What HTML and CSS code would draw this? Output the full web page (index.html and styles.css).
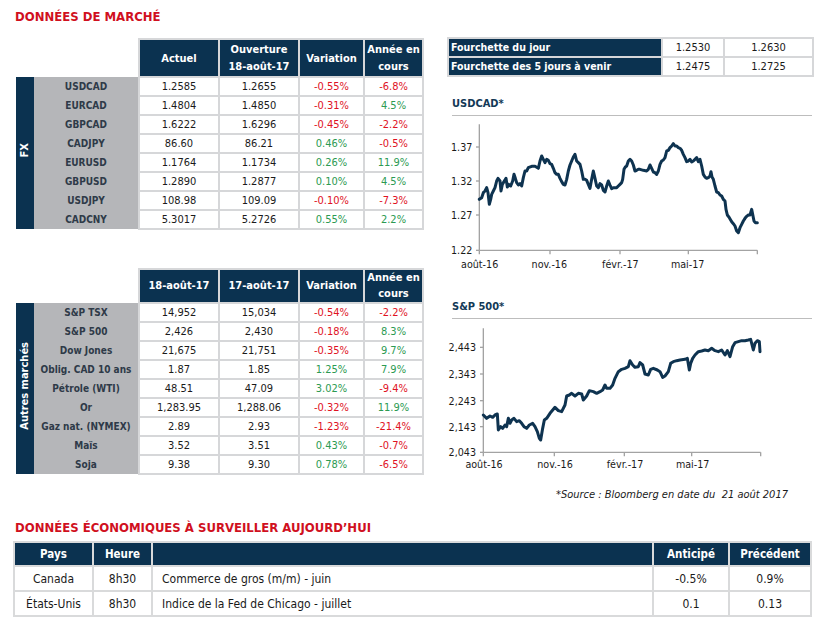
FILE: index.html
```html
<!DOCTYPE html>
<html lang="fr">
<head>
<meta charset="utf-8">
<title>Données de marché</title>
<link rel="stylesheet" href="styles.css">
</head>
<body>
<div class="page">
  <h1 class="title">DONNÉES DE MARCHÉ</h1>
  <div class="top">
    <div class="left">
      <table class="mkt fx">
        <colgroup><col class="c-side"><col class="c-lbl"><col class="c-a"><col class="c-b"><col class="c-c"><col class="c-d"></colgroup>
        <thead>
          <tr><th class="blank" colspan="2"></th><th>Actuel</th><th>Ouverture<br>18-août-17</th><th>Variation</th><th>Année en<br>cours</th></tr>
        </thead>
        <tbody>
          <tr><td class="side" rowspan="8"><span>FX</span></td><td class="lbl">USDCAD</td><td>1.2585</td><td>1.2655</td><td class="neg">-0.55%</td><td class="neg">-6.8%</td></tr>
          <tr><td class="lbl">EURCAD</td><td>1.4804</td><td>1.4850</td><td class="neg">-0.31%</td><td class="pos">4.5%</td></tr>
          <tr><td class="lbl">GBPCAD</td><td>1.6222</td><td>1.6296</td><td class="neg">-0.45%</td><td class="neg">-2.2%</td></tr>
          <tr><td class="lbl">CADJPY</td><td>86.60</td><td>86.21</td><td class="pos">0.46%</td><td class="neg">-0.5%</td></tr>
          <tr><td class="lbl">EURUSD</td><td>1.1764</td><td>1.1734</td><td class="pos">0.26%</td><td class="pos">11.9%</td></tr>
          <tr><td class="lbl">GBPUSD</td><td>1.2890</td><td>1.2877</td><td class="pos">0.10%</td><td class="pos">4.5%</td></tr>
          <tr><td class="lbl">USDJPY</td><td>108.98</td><td>109.09</td><td class="neg">-0.10%</td><td class="neg">-7.3%</td></tr>
          <tr><td class="lbl">CADCNY</td><td>5.3017</td><td>5.2726</td><td class="pos">0.55%</td><td class="pos">2.2%</td></tr>
        </tbody>
      </table>

      <table class="mkt other">
        <colgroup><col class="c-side"><col class="c-lbl"><col class="c-a"><col class="c-b"><col class="c-c"><col class="c-d"></colgroup>
        <thead>
          <tr><th class="blank" colspan="2"></th><th>18-août-17</th><th>17-août-17</th><th>Variation</th><th class="tight">Année en<br>cours</th></tr>
        </thead>
        <tbody>
          <tr><td class="side" rowspan="9"><span>Autres marchés</span></td><td class="lbl">S&amp;P TSX</td><td>14,952</td><td>15,034</td><td class="neg">-0.54%</td><td class="neg">-2.2%</td></tr>
          <tr><td class="lbl">S&amp;P 500</td><td>2,426</td><td>2,430</td><td class="neg">-0.18%</td><td class="pos">8.3%</td></tr>
          <tr><td class="lbl">Dow Jones</td><td>21,675</td><td>21,751</td><td class="neg">-0.35%</td><td class="pos">9.7%</td></tr>
          <tr><td class="lbl">Oblig. CAD 10 ans</td><td>1.87</td><td>1.85</td><td class="pos">1.25%</td><td class="pos">7.9%</td></tr>
          <tr><td class="lbl">Pétrole (WTI)</td><td>48.51</td><td>47.09</td><td class="pos">3.02%</td><td class="neg">-9.4%</td></tr>
          <tr><td class="lbl">Or</td><td>1,283.95</td><td>1,288.06</td><td class="neg">-0.32%</td><td class="pos">11.9%</td></tr>
          <tr><td class="lbl">Gaz nat. (NYMEX)</td><td>2.89</td><td>2.93</td><td class="neg">-1.23%</td><td class="neg">-21.4%</td></tr>
          <tr><td class="lbl">Maïs</td><td>3.52</td><td>3.51</td><td class="pos">0.43%</td><td class="neg">-0.7%</td></tr>
          <tr><td class="lbl">Soja</td><td>9.38</td><td>9.30</td><td class="pos">0.78%</td><td class="neg">-6.5%</td></tr>
        </tbody>
      </table>
    </div>

    <div class="right">
      <table class="range">
        <colgroup><col class="r-lbl"><col class="r-a"><col class="r-b"></colgroup>
        <tbody>
          <tr><th>Fourchette du jour</th><td>1.2530</td><td>1.2630</td></tr>
          <tr><th>Fourchette des 5 jours à venir</th><td>1.2475</td><td>1.2725</td></tr>
        </tbody>
      </table>

      <h2 class="chart-title first">USDCAD*</h2>
      <svg class="chart usd" width="380" height="162" viewBox="0 84 1140 486" xmlns="http://www.w3.org/2000/svg">
        <g class="axis">
          <line x1="118" y1="100" x2="118" y2="478"/>
          <line x1="118" y1="478" x2="952" y2="478"/>
          <line x1="108" y1="168" x2="118" y2="168"/>
          <line x1="108" y1="270" x2="118" y2="270"/>
          <line x1="108" y1="372" x2="118" y2="372"/>
          <line x1="108" y1="478" x2="118" y2="478"/>
          <line x1="118" y1="478" x2="118" y2="490"/>
          <line x1="330" y1="478" x2="330" y2="490"/>
          <line x1="540" y1="478" x2="540" y2="490"/>
          <line x1="745" y1="478" x2="745" y2="490"/>
          <line x1="952" y1="478" x2="952" y2="490"/>
        </g>
        <g class="ylab">
          <text x="97" y="180">1.37</text>
          <text x="97" y="282">1.32</text>
          <text x="97" y="384">1.27</text>
          <text x="97" y="490">1.22</text>
        </g>
        <g class="xlab">
          <text x="119" y="530">août-16</text>
          <text x="328" y="530">nov.-16</text>
          <text x="541" y="530">févr.-17</text>
          <text x="743" y="530">mai-17</text>
        </g>
        <polyline class="series" points="118,325 125,320 130,305 135,300 140,290 144,305 148,340 152,325 155,310 160,300 165,290 170,270 174,262 180,270 183,300 187,280 192,272 198,262 202,288 206,280 212,285 218,270 222,250 226,262 230,275 235,282 240,278 245,285 250,260 255,240 260,240 265,230 275,226 285,226 295,232 300,210 305,195 310,205 315,215 320,205 325,208 330,218 335,220 340,232 345,245 350,250 355,250 360,262 365,272 370,280 375,282 380,265 385,240 390,222 395,210 400,198 405,190 410,210 415,215 420,220 425,240 430,265 435,265 440,268 445,280 450,292 455,265 460,240 465,262 470,285 475,290 480,278 485,282 490,298 495,303 500,285 505,270 510,282 515,293 520,290 530,290 535,285 540,280 545,275 548,265 552,235 556,228 560,225 565,210 570,205 575,210 580,222 585,240 590,238 595,235 600,235 610,238 620,240 625,235 630,222 635,232 640,243 645,245 650,250 655,240 660,220 665,210 670,207 675,200 680,180 685,178 690,170 695,165 700,158 705,165 710,165 715,170 720,172 725,178 730,190 735,200 740,212 745,210 750,205 755,213 760,210 765,205 770,200 775,212 780,205 785,225 790,250 795,258 800,262 805,260 810,255 813,242 816,258 820,265 825,285 830,303 835,305 840,312 845,315 850,325 855,330 858,355 862,372 868,380 875,392 880,398 885,405 890,420 895,425 900,410 905,400 910,390 915,382 920,376 925,372 930,372 935,355 938,370 942,390 946,395 952,395"/>
      </svg>

      <h2 class="chart-title second">S&amp;P 500*</h2>
      <svg class="chart spx" width="380" height="158" viewBox="0 96 1140 474" xmlns="http://www.w3.org/2000/svg">
        <g class="axis">
          <line x1="130" y1="115" x2="130" y2="487"/>
          <line x1="130" y1="487" x2="962" y2="487"/>
          <line x1="120" y1="172" x2="130" y2="172"/>
          <line x1="120" y1="252" x2="130" y2="252"/>
          <line x1="120" y1="332" x2="130" y2="332"/>
          <line x1="120" y1="410" x2="130" y2="410"/>
          <line x1="120" y1="487" x2="130" y2="487"/>
          <line x1="130" y1="487" x2="130" y2="499"/>
          <line x1="343" y1="487" x2="343" y2="499"/>
          <line x1="553" y1="487" x2="553" y2="499"/>
          <line x1="755" y1="487" x2="755" y2="499"/>
          <line x1="962" y1="487" x2="962" y2="499"/>
        </g>
        <g class="ylab">
          <text x="108" y="184">2,443</text>
          <text x="108" y="264">2,343</text>
          <text x="108" y="344">2,243</text>
          <text x="108" y="422">2,143</text>
          <text x="108" y="499">2,043</text>
        </g>
        <g class="xlab">
          <text x="132" y="535">août-16</text>
          <text x="345" y="535">nov.-16</text>
          <text x="555" y="535">févr.-17</text>
          <text x="758" y="535">mai-17</text>
        </g>
        <polyline class="series" points="130,375 140,385 150,378 158,382 165,375 172,372 175,420 182,410 188,415 195,405 200,410 205,385 210,400 215,390 222,385 230,395 238,392 245,400 252,410 260,415 268,405 278,400 285,410 292,425 298,445 302,450 308,415 313,390 320,385 330,370 340,358 345,352 355,362 365,365 375,345 380,318 388,315 395,310 405,318 415,310 425,312 430,330 440,318 448,302 460,305 470,310 480,305 488,300 495,285 500,295 510,295 518,285 525,265 535,245 545,238 555,235 565,230 570,212 578,225 585,232 595,230 600,218 608,225 615,252 625,255 632,238 640,235 652,240 660,245 668,262 675,258 685,245 692,220 700,215 710,212 720,210 735,208 742,205 748,240 752,220 758,205 765,195 775,185 785,183 795,180 805,182 815,175 825,182 835,185 845,180 855,195 862,182 870,200 878,170 885,158 895,155 905,152 915,152 925,150 932,148 940,180 945,160 952,152 958,155 960,185"/>
      </svg>
      <p class="source">*Source : Bloomberg en date du&nbsp; 21 août 2017</p>
    </div>
  </div>

  <h1 class="title eco-title">DONNÉES ÉCONOMIQUES À SURVEILLER AUJOURD’HUI</h1>
  <table class="eco">
    <colgroup><col class="e-pays"><col class="e-heure"><col class="e-desc"><col class="e-ant"><col class="e-prec"></colgroup>
    <thead>
      <tr><th>Pays</th><th>Heure</th><th></th><th>Anticipé</th><th>Précédent</th></tr>
    </thead>
    <tbody>
      <tr><td>Canada</td><td>8h30</td><td class="desc">Commerce de gros (m/m) - juin</td><td>-0.5%</td><td>0.9%</td></tr>
      <tr><td>États-Unis</td><td>8h30</td><td class="desc">Indice de la Fed de Chicago - juillet</td><td>0.1</td><td>0.13</td></tr>
    </tbody>
  </table>
</div>
</body>
</html>
```

FILE: styles.css
```css
html, body {
  margin: 0;
  padding: 0;
  background: #ffffff;
}

body {
  font-family: "DejaVu Sans Condensed", "DejaVu Sans", "Liberation Sans", sans-serif;
  font-size: 11px;
  color: #1a1a1a;
}

.page {
  width: 820px;
  padding: 8px 0 0 13px;
  box-sizing: border-box;
}

.title {
  margin: 0 0 0 2px;
  font-size: 13px;
  line-height: 18px;
  font-weight: bold;
  color: #d0101e;
}

.top {
  display: grid;
  grid-template-columns: 410px 365px;
  column-gap: 24px;
  margin-top: 12px;
}

.left {
  padding-left: 3px;
}

/* market tables */
.mkt {
  border-collapse: collapse;
  table-layout: fixed;
  width: 407px;
}

.mkt .c-side { width: 18px; }
.mkt .c-lbl { width: 105px; }
.mkt .c-a { width: 80px; }
.mkt .c-b { width: 80px; }
.mkt .c-c { width: 65px; }
.mkt .c-d { width: 59px; }

.mkt th {
  background: #0b3250;
  color: #ffffff;
  font-weight: bold;
  border: 2px solid #d6d7d9;
  padding: 0;
  text-align: center;
  vertical-align: middle;
}

.fx th {
  height: 36px;
  line-height: 17px;
}

.other th {
  height: 29px;
  line-height: 16px;
}

.mkt th.tight {
  vertical-align: top;
}

.mkt th.blank {
  background: transparent;
  border: none;
}

.mkt td {
  border: 2px solid #d6d7d9;
  height: 17px;
  padding: 0;
  text-align: center;
  line-height: 17px;
  white-space: nowrap;
}

.mkt td.side {
  background: #0b3250;
  border: none;
  color: #ffffff;
  font-weight: bold;
  padding: 0;
}

.mkt td.side span {
  display: inline-block;
  writing-mode: vertical-rl;
  transform: rotate(180deg);
  line-height: 18px;
  font-size: 11px;
}

.mkt td.lbl {
  background: #b5b6b9;
  border-top: none;
  border-bottom: none;
  border-left: none;
  color: #2e3a48;
  font-weight: bold;
  font-size: 10px;
}

.neg { color: #e0121f; }
.pos { color: #2c9a52; }

.other {
  margin-top: 38px;
}

/* right column */
.range {
  border-collapse: collapse;
  table-layout: fixed;
  width: 365px;
  margin-top: -1px;
}

.range .r-lbl { width: 214px; }
.range .r-a { width: 62px; }
.range .r-b { width: 89px; }

.range th {
  background: #0b3250;
  color: #ffffff;
  font-weight: bold;
  text-align: left;
  padding: 0 0 0 2px;
  border: 2px solid #d6d7d9;
  height: 17px;
  line-height: 17px;
  font-size: 10.5px;
}

.range td {
  border: 2px solid #d6d7d9;
  text-align: center;
  height: 17px;
  line-height: 17px;
  padding: 0;
}

.chart-title {
  margin: 0 0 0 5px;
  font-size: 11px;
  line-height: 16px;
  font-weight: bold;
  color: #123956;
  padding-bottom: 3px;
  border-bottom: 1px solid #bdbdbd;
}

.chart-title.first {
  margin-top: 19px;
}

.chart-title.second {
  margin-top: 18px;
}

.chart {
  display: block;
  margin-left: -7px;
  margin-top: 3px;
}

.chart .axis line {
  stroke: #a3a3a3;
  stroke-width: 4;
}

.chart text {
  font-family: "DejaVu Sans Condensed", "DejaVu Sans", sans-serif;
  font-size: 32px;
  fill: #1a1a1a;
}

.chart .ylab text {
  text-anchor: end;
}

.chart .xlab text {
  text-anchor: middle;
}

.chart .series {
  fill: none;
  stroke: #0e3350;
  stroke-width: 9;
  stroke-linejoin: round;
  stroke-linecap: round;
}

.source {
  margin: 8px 24px 0 0;
  text-align: right;
  font-style: italic;
  font-size: 11px;
  color: #1a1a1a;
}

/* economic table */
.eco-title {
  margin-top: 18px;
}

.eco {
  border-collapse: collapse;
  table-layout: fixed;
  width: 797px;
  margin-top: 4px;
}

.eco .e-pays { width: 79px; }
.eco .e-heure { width: 59px; }
.eco .e-desc { width: 501px; }
.eco .e-ant { width: 76px; }
.eco .e-prec { width: 82px; }

.eco th {
  background: #0b3250;
  color: #ffffff;
  font-weight: bold;
  border: 2px solid #d9dadb;
  height: 22px;
  padding: 0;
  text-align: center;
  font-size: 11.5px;
}

.eco td {
  border: 2px solid #d9dadb;
  height: 23px;
  padding: 0;
  text-align: center;
  font-size: 12px;
}

.eco td.desc {
  text-align: left;
  padding-left: 9px;
}
```
